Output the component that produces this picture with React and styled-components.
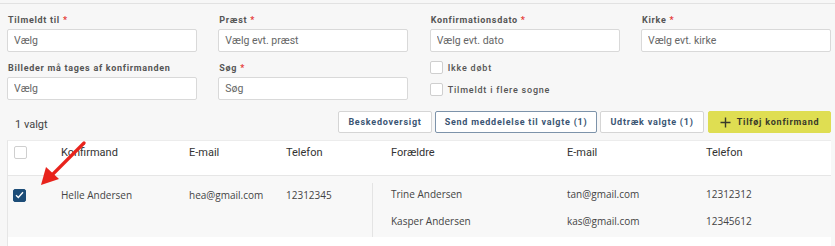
import React from 'react';
import styled, { createGlobalStyle } from 'styled-components';

const GlobalStyle = createGlobalStyle`
  html, body {
    margin: 0;
    padding: 0;
    background: #f7f7f7;
    font-family: Roboto, 'Liberation Sans', sans-serif;
  }
`;

const parents = [
  { name: 'Trine Andersen', email: 'tan@gmail.com', phone: '12312312' },
  { name: 'Kasper Andersen', email: 'kas@gmail.com', phone: '12345612' },
];

const App = () => {
  return (
    <Page>
      <GlobalStyle />
      <TopRule />
      <Filters>
        <Field>
          <Label>Tilmeldt til <Req>*</Req></Label>
          <Input placeholder='Vælg' />
        </Field>
        <Field>
          <Label>Præst <Req>*</Req></Label>
          <Input placeholder='Vælg evt. præst' />
        </Field>
        <Field>
          <Label>Konfirmationsdato <Req>*</Req></Label>
          <Input placeholder='Vælg evt. dato' />
        </Field>
        <Field>
          <Label>Kirke <Req>*</Req></Label>
          <Input placeholder='Vælg evt. kirke' />
        </Field>

        <Field>
          <Label>Billeder må tages af konfirmanden</Label>
          <Input placeholder='Vælg' />
        </Field>
        <Field>
          <Label>Søg <Req>*</Req></Label>
          <Input placeholder='Søg' />
        </Field>
        <Checks>
          <CheckRow>
            <Box />
            <CheckText>Ikke døbt</CheckText>
          </CheckRow>
          <CheckRow>
            <Box />
            <CheckText>Tilmeldt i flere sogne</CheckText>
          </CheckRow>
        </Checks>
      </Filters>

      <Toolbar>
        <Count>1 valgt</Count>
        <Buttons>
          <Button $w={94}>Beskedoversigt</Button>
          <Button $w={162} $active>Send meddelelse til valgte (1)</Button>
          <Button $w={104}>Udtræk valgte (1)</Button>
          <AddButton $w={123}>
            <svg width='11' height='11' viewBox='0 0 11 11'>
              <path d='M5.5 0.5v10M0.5 5.5h10' stroke='#3a3a2a' strokeWidth='1.4' />
            </svg>
            Tilføj konfirmand
          </AddButton>
        </Buttons>
      </Toolbar>

      <Table>
        <HeadRow>
          <Cell><Box /></Cell>
          <Cell>Konfirmand</Cell>
          <Cell>E-mail</Cell>
          <Cell>Telefon</Cell>
          <Cell>Forældre</Cell>
          <Cell>E-mail</Cell>
          <Cell>Telefon</Cell>
          <Cell />
        </HeadRow>
        <BodyRow $selected>
          <Student>
            <BodyCell><Box $checked>
              <svg width='9' height='8' viewBox='0 0 9 8'>
                <path d='M1 4.2l2.3 2.2L8 1.3' fill='none' stroke='#fff' strokeWidth='1.4' />
              </svg>
            </Box></BodyCell>
            <BodyCell>Helle Andersen</BodyCell>
            <BodyCell>hea@gmail.com</BodyCell>
            <BodyCell>12312345</BodyCell>
          </Student>
          <Parents>
            {parents.map((p) => (
              <ParentRow key={p.name}>
                <BodyCell>{p.name}</BodyCell>
                <BodyCell>{p.email}</BodyCell>
                <BodyCell>{p.phone}</BodyCell>
              </ParentRow>
            ))}
          </Parents>
        </BodyRow>
        <BodyRow />
        <Arrow width='50' height='48' viewBox='0 0 50 48'>
          <path d='M46 2L14 34' stroke='#e8231c' strokeWidth='3.2' strokeLinecap='round' />
          <path d='M3 44L8 26L21 38Z' fill='#e8231c' />
        </Arrow>
      </Table>
    </Page>
  );
};

export default App;

const Page = styled.div`
  width: 835px;
  height: 246px;
  overflow: hidden;
  padding: 3px 4px 0 7px;
  box-sizing: border-box;
`;

const TopRule = styled.div`
  height: 1px;
  background: #e2e2e2;
  margin: 0 -4px 0 -7px;
`;

const Filters = styled.div`
  display: grid;
  grid-template-columns: repeat(4, 190px);
  column-gap: 21.33px;
  row-gap: 9px;
  padding-top: 9px;
`;

const Field = styled.div`
  display: flex;
  flex-direction: column;
`;

const Label = styled.div`
  font-size: 9px;
  font-weight: 700;
  letter-spacing: 0.7px;
  line-height: 14px;
  color: #555;
  margin-bottom: 2px;
  padding-left: 1px;
`;

const Req = styled.span`
  color: #e53935;
`;

const Input = styled.input`
  height: 23px;
  box-sizing: border-box;
  border: 1px solid #d9d9d9;
  border-radius: 2px;
  background: #fff;
  padding: 0 6px;
  font-family: Roboto, sans-serif;
  font-size: 10.5px;
  outline: none;
  &::placeholder {
    color: #666;
  }
`;

const Checks = styled.div`
  display: flex;
  flex-direction: column;
  gap: 9px;
`;

const CheckRow = styled.div`
  display: flex;
  align-items: center;
  gap: 5px;
`;

const CheckText = styled.span`
  font-size: 9px;
  letter-spacing: 0.8px;
  color: #555;
  font-weight: 500;
`;

const Box = styled.div`
  width: 13px;
  height: 13px;
  box-sizing: border-box;
  border: 1px solid ${(p) => (p.$checked ? '#1d4d78' : '#cfcfcf')};
  background: ${(p) => (p.$checked ? '#1d4d78' : '#fff')};
  border-radius: 2px;
  display: flex;
  align-items: center;
  justify-content: center;
`;

const Toolbar = styled.div`
  display: flex;
  align-items: center;
  justify-content: space-between;
  margin-top: 11px;
  height: 22px;
`;

const Count = styled.div`
  font-size: 11px;
  color: #444;
  padding-left: 8px;
  padding-top: 5px;
`;

const Buttons = styled.div`
  display: flex;
  gap: 3px;
`;

const Button = styled.button`
  width: ${(p) => p.$w}px;
  height: 22px;
  box-sizing: border-box;
  padding: 0;
  border: 1px solid ${(p) => (p.$active ? '#7d93aa' : '#d5d5d5')};
  border-radius: 2px;
  background: #fff;
  font-family: Roboto, sans-serif;
  font-size: 9px;
  font-weight: 700;
  letter-spacing: 0.75px;
  color: #3a5573;
  text-align: center;
`;

const AddButton = styled(Button)`
  margin-left: 1px;
  border-color: #dede52;
  background: #dfde52;
  color: #3a3a2a;
  display: flex;
  align-items: center;
  justify-content: center;
  gap: 6px;
`;

const Table = styled.div`
  position: relative;
  margin-top: 7px;
  background: #fff;
  border-left: 1px solid #e6e6e6;
  border-top: 1px solid #ececec;
`;

const columns = '53px 128px 97px 105px 176px 139px 1fr';

const HeadRow = styled.div`
  display: grid;
  grid-template-columns: ${columns};
  height: 34px;
  align-items: center;
  border-bottom: 1px solid #e6e6e6;
`;

const Cell = styled.div`
  font-size: 11px;
  color: #333;
  &:first-child {
    padding-left: 6px;
  }
`;

const BodyRow = styled.div`
  display: flex;
  min-height: 30px;
  background: ${(p) => (p.$selected ? '#f8f8f8' : '#fff')};
`;

const Student = styled.div`
  display: grid;
  grid-template-columns: 53px 128px 97px 86px;
  padding-top: 8px;
  height: 22px;
  align-items: center;
`;

const BodyCell = styled.div`
  font-family: 'Open Sans', sans-serif;
  font-size: 10px;
  color: #444;
  &:first-child > div {
    margin-left: 5px;
  }
`;

const Parents = styled.div`
  flex: 1;
  margin-top: 7px;
  border-left: 1px solid #e4e4e4;
  padding: 0 0 5px 18px;
  display: flex;
  flex-direction: column;
  gap: 5px;
`;

const ParentRow = styled.div`
  display: grid;
  grid-template-columns: 176px 139px 1fr;
  height: 22px;
  align-items: center;
`;

const Arrow = styled.svg`
  position: absolute;
  left: 30px;
  top: 0px;
`;
